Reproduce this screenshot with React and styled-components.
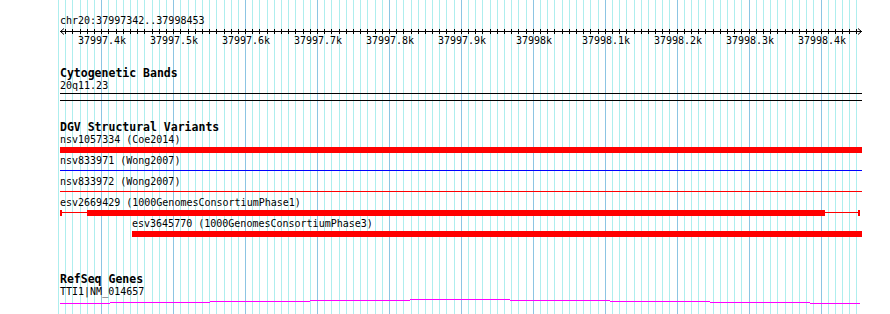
import React from "react";
import styled, { createGlobalStyle } from "styled-components";

const START = 37997342;
const END = 37998453;
const X0 = 60.5;
const PX = 0.7193; // px per bp
const VIEW_W = 802;

const toX = bp => X0 + (bp - START) * PX;
const toLocal = bp => toX(bp) - 60;
const kLabel = bp => `${parseFloat((bp / 1000).toFixed(1))}k`;

const GlobalStyle = createGlobalStyle`
  html, body {
    margin: 0;
    padding: 0;
    background: #fff;
  }
  body {
    font-family: "DejaVu Sans Mono", "Liberation Mono", monospace;
    color: #000;
  }
`;

const Page = styled.div`
  position: relative;
  width: 890px;
  height: 314px;
  overflow: hidden;
  background: #fff;
`;

const GridLayer = styled.svg`
  position: absolute;
  top: 0;
  left: 0;
  z-index: 0;
`;

const Content = styled.div`
  position: relative;
  z-index: 1;
  padding-left: 60px;
  width: ${VIEW_W}px;
`;

const Ruler = styled.div`
  height: 48px;
  display: flex;
  flex-direction: column;
`;

const Locus = styled.div`
  margin-top: 15px;
  font-size: 10px;
  line-height: 12px;
`;

const Track = styled.section`
  margin-top: ${p => p.$gap}px;
  display: flex;
  flex-direction: column;
`;

const TrackTitle = styled.h2`
  margin: 0;
  font-size: 11.5px;
  line-height: 13px;
  font-weight: bold;
  white-space: nowrap;
`;

const Row = styled.div`
  display: flex;
  flex-direction: column;
  padding-left: ${p => p.$offset || 0}px;
`;

const Label = styled.div`
  font-size: 10px;
  line-height: 12px;
  white-space: nowrap;
`;

const Band = styled.div`
  margin-top: 1px;
  height: 6px;
  border-top: 1px solid #000;
  border-bottom: 1px solid #000;
`;

const Lane = styled.div`
  height: 9px;
  display: flex;
  align-items: flex-start;
`;

const Thick = styled.div`
  margin-top: 1px;
  height: 6px;
  background: ${p => p.$color};
  flex: none;
`;

const Thin = styled.div`
  margin-top: 3px;
  height: 1px;
  background: ${p => p.$color};
  flex: none;
`;

const Cap = styled.div`
  margin-top: 1px;
  width: 2px;
  height: 6px;
  background: ${p => p.$color};
  flex: none;
`;

const GeneLane = styled.svg`
  display: block;
`;

const minorTicks = [];
for (let bp = 37997340; bp <= END; bp += 10) minorTicks.push(bp);
const majorTicks = minorTicks.filter(bp => bp % 100 === 0);

const Grid = () => (
  <GridLayer width="890" height="314" shapeRendering="crispEdges">
    {minorTicks.map(bp => {
      const x = Math.round(toX(bp)) - 0.5;
      const major = bp % 100 === 0;
      return (
        <line
          key={bp}
          x1={x}
          x2={x}
          y1="0"
          y2="314"
          stroke={major ? "#8cc5e3" : "#aeeeee"}
          strokeWidth="1"
        />
      );
    })}
  </GridLayer>
);

const Axis = () => (
  <svg width={VIEW_W + 4} height="21" style={{ display: "block", marginLeft: -1 }}>
    <g shapeRendering="crispEdges" stroke="#000" strokeWidth="1">
      <line x1="1" x2={VIEW_W + 1} y1="4.5" y2="4.5" />
      {minorTicks
        .filter(bp => bp > START)
        .map(bp => {
          const x = Math.round(toLocal(bp)) + 0.5;
          return <line key={bp} x1={x} x2={x} y1="2" y2="7" />;
        })}
    </g>
    <g stroke="#000" strokeWidth="1" fill="none">
      <polyline points="5,1.5 1.5,4.5 5,7.5" />
      <polyline points={`${VIEW_W - 3},1.5 ${VIEW_W + 0.5},4.5 ${VIEW_W - 3},7.5`} />
    </g>
    {majorTicks.map(bp => (
      <text
        key={bp}
        x={Math.round(toLocal(bp)) + 1}
        y="17"
        textAnchor="middle"
        fontSize="10"
        fontFamily='"DejaVu Sans Mono", monospace'
        fill="#000"
      >
        {kLabel(bp)}
      </text>
    ))}
  </svg>
);

const variants = [
  { id: "nsv1057334", study: "Coe2014", kind: "thick", color: "#ff0000" },
  { id: "nsv833971", study: "Wong2007", kind: "thin", color: "#0000ff" },
  { id: "nsv833972", study: "Wong2007", kind: "thin", color: "#ff0000" },
  {
    id: "esv2669429",
    study: "1000GenomesConsortiumPhase1",
    kind: "whisker",
    color: "#ff0000",
    inner: [27, 765]
  },
  {
    id: "esv3645770",
    study: "1000GenomesConsortiumPhase3",
    kind: "thick",
    color: "#ff0000",
    offset: 72
  }
];

const VariantLane = ({ v }) => {
  const w = VIEW_W - (v.offset || 0);
  if (v.kind === "thin")
    return (
      <Lane>
        <Thin $color={v.color} style={{ width: w }} />
      </Lane>
    );
  if (v.kind === "whisker") {
    const [a, b] = v.inner;
    return (
      <Lane>
        <Cap $color={v.color} />
        <Thin $color={v.color} style={{ width: a - 2 }} />
        <Thick $color={v.color} style={{ width: b - a }} />
        <Thin $color={v.color} style={{ width: VIEW_W - 2 - b - 2 }} />
        <Cap $color={v.color} />
      </Lane>
    );
  }
  return (
    <Lane>
      <Thick $color={v.color} style={{ width: w }} />
    </Lane>
  );
};

// intron line of the gene, as the browser rasterises a very flat caret
const geneSteps = [
  [0, 50, 5],
  [50, 150, 4],
  [150, 250, 3],
  [250, 350, 2],
  [350, 450, 1],
  [450, 550, 2],
  [550, 650, 3],
  [650, 750, 4],
  [750, 800, 5]
];

const App = () => (
  <>
    <GlobalStyle />
    <Page>
      <Grid />
      <Content>
        <Ruler>
          <Locus>chr20:37997342..37998453</Locus>
          <Axis />
        </Ruler>

        <Track $gap={19}>
          <TrackTitle>Cytogenetic Bands</TrackTitle>
          <Label>20q11.23</Label>
          <Band />
        </Track>

        <Track $gap={20}>
          <TrackTitle>DGV Structural Variants</TrackTitle>
          {variants.map(v => (
            <Row key={v.id} $offset={v.offset}>
              <Label>{`${v.id} (${v.study})`}</Label>
              <VariantLane v={v} />
            </Row>
          ))}
        </Track>

        <Track $gap={34}>
          <TrackTitle>RefSeq Genes</TrackTitle>
          <Label>TTI1|NM_014657</Label>
          <GeneLane width={VIEW_W} height="8" shapeRendering="crispEdges">
            {geneSteps.map(([a, b, y]) => (
              <line key={a} x1={a} x2={b} y1={y + 0.5} y2={y + 0.5} stroke="#ff00ff" strokeWidth="1" />
            ))}
          </GeneLane>
        </Track>
      </Content>
    </Page>
  </>
);

export default App;
